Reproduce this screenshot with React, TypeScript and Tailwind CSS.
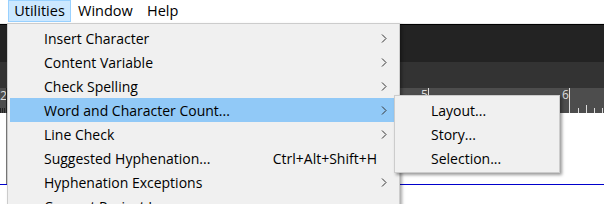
import React from 'react';

const font = { fontFamily: '"Segoe UI", "Open Sans", "Noto Sans", sans-serif' };

const Chevron: React.FC = () => (
  <svg width="6" height="9" viewBox="0 0 6 9" className="shrink-0">
    <polyline points="1,0.5 5,4.5 1,8.5" fill="none" stroke="#333" strokeWidth="1" />
  </svg>
);

type Item = { label: string; sub?: boolean; shortcut?: string; active?: boolean };

const ITEMS: Item[] = [
  { label: 'Insert Character', sub: true },
  { label: 'Content Variable', sub: true },
  { label: 'Check Spelling', sub: true },
  { label: 'Word and Character Count...', sub: true, active: true },
  { label: 'Line Check', sub: true },
  { label: 'Suggested Hyphenation...', shortcut: 'Ctrl+Alt+Shift+H' },
  { label: 'Hyphenation Exceptions', sub: true },
  { label: 'Convert Project Language...' },
];

const MenuRow: React.FC<{ item: Item }> = ({ item }) => (
  <div className={`flex items-center h-[24px] mx-[2px] pl-[34px] pr-[10px] ${item.active ? 'bg-[#91c9f7]' : ''}`}>
    <span className="flex-1 whitespace-nowrap">{item.label}</span>
    {item.shortcut && <span className="whitespace-nowrap mr-[10px]">{item.shortcut}</span>}
    {item.sub && <Chevron />}
  </div>
);

// ruler strip drawn as a picture
const Ruler: React.FC = () => (
  <svg width="604" height="25" className="block">
    <rect width="604" height="25" fill="#4d4d4d" />
    <text x="0" y="12" fontSize="12" fill="#ddd" fontFamily="Open Sans, sans-serif">2</text>
    <line x1="6.5" y1="0" x2="6.5" y2="25" stroke="#1e1e1e" />
    {[0, 2, 4].map(x => (
      <line key={x} x1={x + 0.5} y1="20" x2={x + 0.5} y2="25" stroke="#222" />
    ))}
    <text x="421" y="11" fontSize="12" fill="#ddd" fontFamily="Open Sans, sans-serif">5</text>
    <line x1="428.5" y1="0" x2="428.5" y2="25" stroke="#ddd" />
    <text x="562" y="11" fontSize="12" fill="#ddd" fontFamily="Open Sans, sans-serif">6</text>
    <line x1="569.5" y1="0" x2="569.5" y2="25" stroke="#ddd" />
    {[578, 586, 594, 602].map((x, i) => (
      <line key={x} x1={x + 0.5} y1={i === 1 ? 17 : 20} x2={x + 0.5} y2="25" stroke="#ddd" />
    ))}
  </svg>
);

export default function App() {
  return (
    <div className="relative w-[604px] h-[204px] overflow-hidden bg-white text-[14px] text-black" style={font}>
      {/* menu bar */}
      <div className="flex h-[23px] bg-white text-[14.5px]">
        <div className="ml-[8px] w-[63px] h-[22px] flex items-center justify-center bg-[#cce8ff] border border-[#99d1ff]">Utilities</div>
        <div className="pl-[7px] w-[76px] h-[22px] flex items-center">Window</div>
        <div className="h-[22px] flex items-center">Help</div>
      </div>
      <div className="h-px bg-[#ebebeb]" />
      {/* app chrome behind the menu */}
      <div className="h-[38px] bg-[#232323] border-t border-black" />
      <div className="h-[26px] bg-[#333333]" />
      <Ruler />
      <div className="flex flex-col h-[91px] bg-white">
        <div className="h-[71px] w-[7px] border-r border-[#777]" />
        <div className="h-px bg-[#0000cc]" />
      </div>

      {/* Utilities dropdown */}
      <div className="absolute left-[7px] top-[23px] w-[393px] h-[200px] bg-[#f0f0f0] border border-[#cccccc] pt-[2px] shadow-[2px_2px_3px_rgba(0,0,0,0.35)]">
        {ITEMS.map(item => (
          <MenuRow key={item.label} item={item} />
        ))}
      </div>

      {/* Word and Character Count submenu */}
      <div className="absolute left-[394px] top-[95px] w-[166px] bg-[#f0f0f0] border border-[#cccccc] pt-[2px] pb-[2px] shadow-[2px_2px_3px_rgba(0,0,0,0.4)]">
        {['Layout...', 'Story...', 'Selection...'].map(l => (
          <div key={l} className="flex items-center h-[24px] pl-[36px] whitespace-nowrap">{l}</div>
        ))}
      </div>
    </div>
  );
}
